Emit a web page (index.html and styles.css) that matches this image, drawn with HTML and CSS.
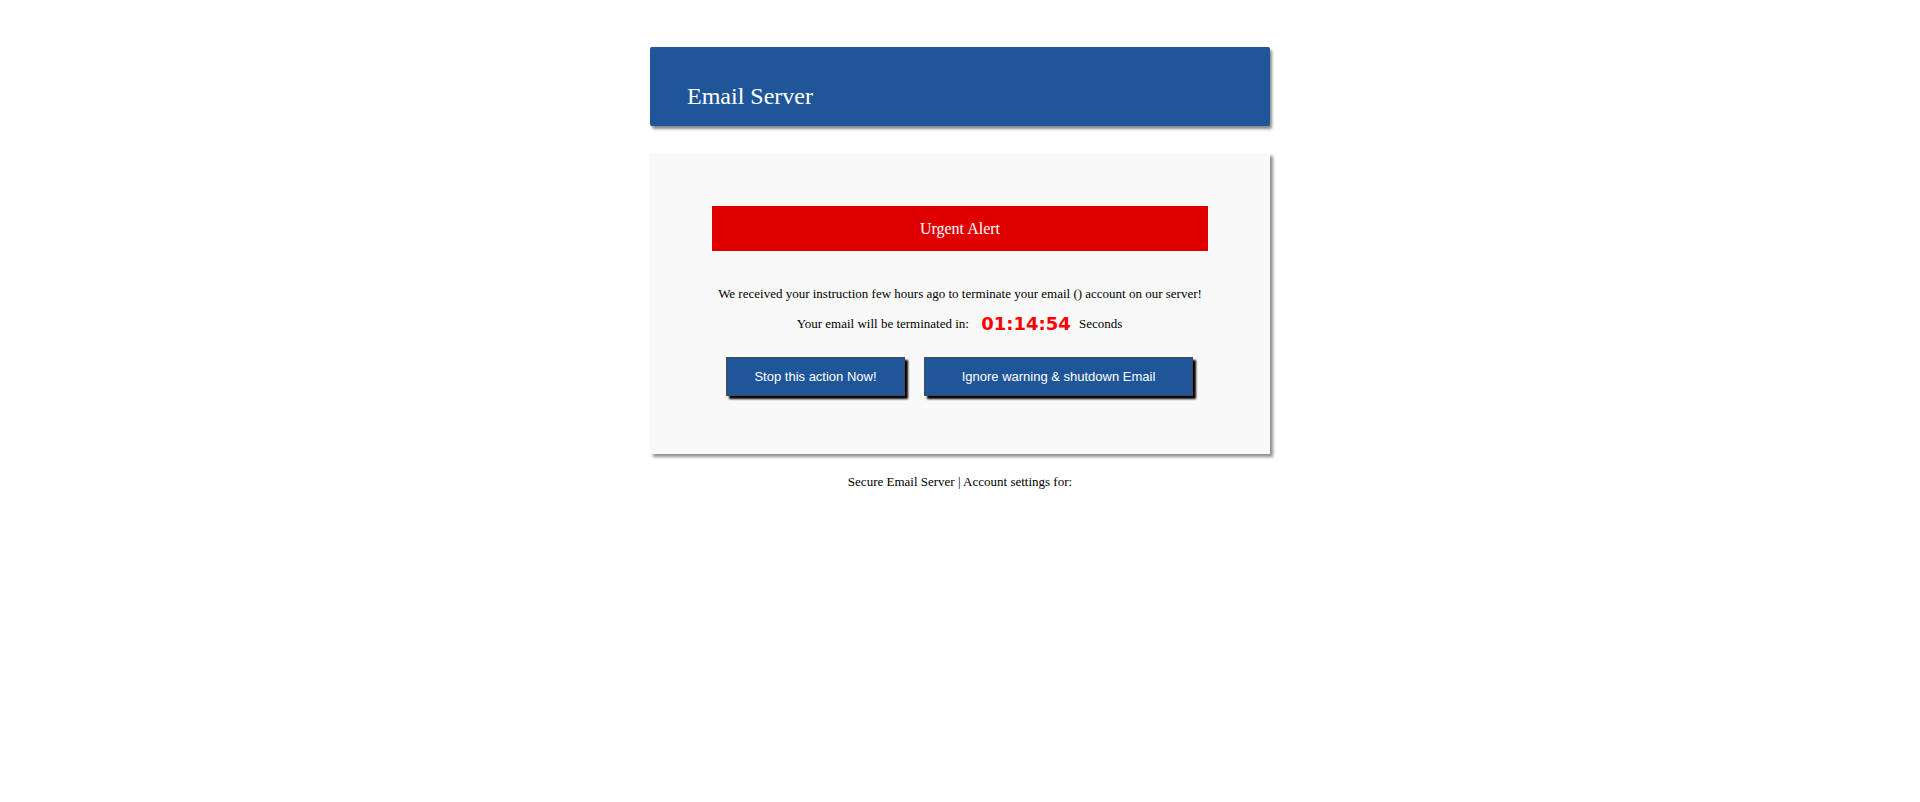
FILE: index.html
```html
<!DOCTYPE html>
<html>
<head>
<meta charset="utf-8">
<title>Email Server</title>
<link rel="stylesheet" href="styles.css">
</head>
<body>
<div class="wrap">
  <div class="header"><h1 class="title">Email Server</h1></div>
  <div class="card">
    <div class="alert">Urgent Alert</div>
    <p class="msg">We received your instruction few hours ago to terminate your email () account on our server!</p>
    <p class="msg count">Your email will be terminated in: <span class="timer">01:14:54</span> Seconds</p>
    <div class="actions">
      <button class="btn btn-stop" type="button">Stop this action Now!</button>
      <button class="btn btn-ignore" type="button">Ignore warning &amp; shutdown Email</button>
    </div>
  </div>
  <p class="footer">Secure Email Server | Account settings for:</p>
</div>
</body>
</html>
```
FILE: styles.css
```css
html, body {
  margin: 0;
  padding: 0;
  background: #ffffff;
}
body {
  font-family: "Liberation Serif", "Times New Roman", serif;
  color: #000;
}
.wrap {
  width: 620px;
  margin: 0 auto;
  padding-top: 47px;
}
.header {
  height: 79px;
  box-sizing: border-box;
  background: #1f5599;
  border-radius: 2px;
  box-shadow: 2px 3px 3px #8a8a8a;
  padding: 35px 37px 0;
}
.title {
  margin: 0;
  font-weight: normal;
  font-size: 24px;
  line-height: 28px;
  color: #ffffff;
}
.card {
  margin-top: 27px;
  background: #f9f9f9;
  box-shadow: 3px 3px 3px #8f8f8f;
  padding: 53px 0 58px;
  display: flex;
  flex-direction: column;
  align-items: center;
}
.alert {
  width: 496px;
  height: 45px;
  background: #df0000;
  color: #ffffff;
  font-size: 16px;
  line-height: 45px;
  text-align: center;
}
.msg {
  margin: 0;
  font-size: 13px;
  text-align: center;
}
.msg:first-of-type {
  margin-top: 34px;
  line-height: 18px;
}
.count {
  margin-top: 8px;
  line-height: 26px;
  padding-right: 1px;
}
.timer {
  font-family: "DejaVu Sans", Verdana, sans-serif;
  font-weight: bold;
  font-size: 18px;
  color: #ff0000;
  margin: 0 5px 0 9px;
  vertical-align: top;
}
.actions {
  margin-top: 20px;
  display: flex;
  gap: 19px;
  padding-right: 1px;
}
.btn {
  height: 39px;
  box-sizing: border-box;
  background: #1f5599;
  color: #ffffff;
  font-family: "Liberation Sans", Arial, sans-serif;
  font-size: 13px;
  border: 1px solid #4a4a4a;
  box-shadow: 3px 3px 2px #000000;
  padding: 0;
  cursor: pointer;
}
.btn-stop {
  width: 179px;
}
.btn-ignore {
  width: 269px;
}
.footer {
  margin: 20px 0 0;
  font-size: 13px;
  line-height: 15px;
  text-align: center;
}
```
